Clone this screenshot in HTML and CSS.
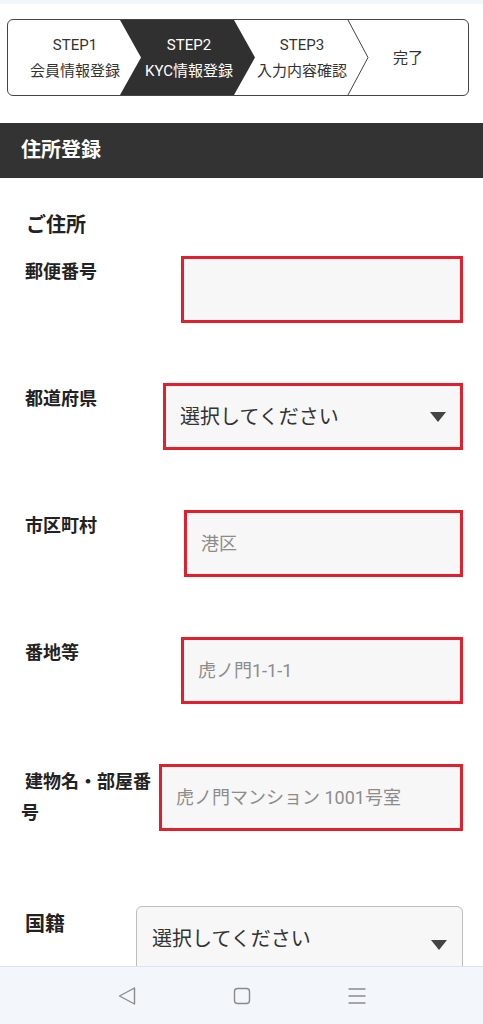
FILE: index.html
```html
<!DOCTYPE html>
<html lang="ja">
<head>
  <meta charset="UTF-8" />
  <meta name="viewport" content="width=device-width, initial-scale=1.0"/>
  <title>住所登録</title>
  <link rel="stylesheet" href="styles.css">
</head>
<body>
  <div class="status-strip"></div>

  <main class="page">
    <nav class="stepper">
      <svg class="stepper-bg" viewBox="0 0 460 75" preserveAspectRatio="none">
        <polygon points="112,0 226,0 247,37.5 226,75 112,75 133,37.5" fill="#303030"/>
        <polyline points="340,0 360,37.5 340,75" fill="none" stroke="#444" stroke-width="1"/>
      </svg>
      <div class="step step-1"><span>STEP1</span><span>会員情報登録</span></div>
      <div class="step step-2 active"><span>STEP2</span><span>KYC情報登録</span></div>
      <div class="step step-3"><span>STEP3</span><span>入力内容確認</span></div>
      <div class="step step-4"><span>完了</span></div>
    </nav>

    <h2 class="section-title">住所登録</h2>

    <form class="address-form">
      <h3 class="group-title">ご住所</h3>

      <div class="field-row row-zip">
        <label class="field-label" for="zip">郵便番号</label>
        <div class="field field-alert">
          <input type="text" id="zip" name="zip" />
        </div>
      </div>

      <div class="field-row row-pref">
        <label class="field-label" for="pref">都道府県</label>
        <div class="field field-alert field-select">
          <select id="pref" name="pref">
            <option>選択してください</option>
          </select>
          <span class="caret"></span>
        </div>
      </div>

      <div class="field-row row-city">
        <label class="field-label" for="city">市区町村</label>
        <div class="field field-alert">
          <input type="text" id="city" name="city" placeholder="港区" />
        </div>
      </div>

      <div class="field-row row-street">
        <label class="field-label" for="street">番地等</label>
        <div class="field field-alert">
          <input type="text" id="street" name="street" placeholder="虎ノ門1-1-1" />
        </div>
      </div>

      <div class="field-row row-building">
        <label class="field-label" for="building">建物名・部屋番号</label>
        <div class="field field-alert">
          <input type="text" id="building" name="building" placeholder="虎ノ門マンション 1001号室" />
        </div>
      </div>

      <div class="field-row row-nation">
        <label class="field-label" for="nation">国籍</label>
        <div class="field field-plain field-select">
          <select id="nation" name="nation">
            <option>選択してください</option>
          </select>
          <span class="caret"></span>
        </div>
      </div>
    </form>
  </main>

  <footer class="nav-bar">
    <svg class="nav-icon" viewBox="0 0 18 18">
      <polygon points="16.5,1 1.5,9 16.5,17" />
    </svg>
    <svg class="nav-icon" viewBox="0 0 18 18">
      <rect x="1.5" y="1.5" width="15" height="15" rx="3" />
    </svg>
    <svg class="nav-icon" viewBox="0 0 18 18">
      <line x1="1" y1="2" x2="17" y2="2" />
      <line x1="1" y1="9" x2="17" y2="9" />
      <line x1="1" y1="16" x2="17" y2="16" />
    </svg>
  </footer>
</body>
</html>
```

FILE: styles.css
```css
html, body {
  margin: 0;
  height: 100%;
}
body {
  font-family: Roboto, "Noto Sans CJK JP", sans-serif;
  color: #222;
  background: #fff;
  display: flex;
  flex-direction: column;
  overflow: hidden;
}
.status-strip {
  height: 4px;
  background: #f2f7fb;
  flex: none;
}
.page {
  flex: 1;
  overflow: hidden;
}

/* stepper */
.stepper {
  position: relative;
  display: flex;
  height: 75px;
  margin: 15px 14px 0 7px;
  border: 1px solid #444;
  border-radius: 6px;
  overflow: hidden;
}
.stepper-bg {
  position: absolute;
  left: 0;
  top: 0;
  width: 100%;
  height: 100%;
}
.step {
  position: relative;
  box-sizing: border-box;
  display: flex;
  flex-direction: column;
  align-items: center;
  justify-content: center;
  font-size: 15px;
  line-height: 26px;
  color: #333;
  flex: none;
}
.step-1 { width: 114px; padding-left: 20px; }
.step-2 { width: 134px; }
.step-3 { width: 92px; }
.step-4 { width: 120px; }
.step.active {
  color: #fff;
}

.section-title {
  margin: 27px 0 0;
  height: 55px;
  line-height: 55px;
  padding-left: 21px;
  background: #333;
  color: #fff;
  font-size: 20px;
  font-weight: 700;
}

/* form */
.address-form {
  padding: 0 20px 0 21px;
}
.group-title {
  margin: 32px 0 16px;
  text-indent: 5px;
  font-size: 20px;
  line-height: 30px;
  font-weight: 700;
}
.field-row {
  display: flex;
  align-items: flex-start;
  margin-bottom: 60px;
}
.field-label {
  flex: none;
  font-size: 18px;
  line-height: 31px;
  font-weight: 700;
  text-indent: 4px;
  color: #222;
}
.row-zip .field-label { width: 160px; }
.row-pref .field-label { width: 142px; }
.row-city .field-label { width: 163px; }
.row-street .field-label { width: 160px; }
.row-building .field-label { width: 136px; margin-top: 2px; margin-right: 2px; }
.row-nation { margin-top: 75px; }
.row-nation .field-label {
  width: 115px;
  font-size: 20px;
  margin-top: 3px;
}

.field {
  flex: 1;
  box-sizing: border-box;
  height: 67px;
  display: flex;
  align-items: center;
  padding: 0 14px;
  background: #f7f7f7;
}
.field-alert {
  border: 3px solid #e0202c;
}
.field-plain {
  border: 1px solid #bdbdbd;
  border-radius: 6px;
  padding: 0 15px;
}
.field input {
  width: 100%;
  border: none;
  background: transparent;
  padding: 0;
  font-family: inherit;
  font-size: 18px;
  color: #333;
  outline: none;
}
.field input::placeholder {
  color: #8c8c8c;
}
.field select {
  flex: 1;
  appearance: none;
  -webkit-appearance: none;
  border: none;
  background: transparent;
  padding: 0;
  font-family: inherit;
  font-size: 20px;
  color: #333;
  outline: none;
}
.caret {
  flex: none;
  width: 0;
  height: 0;
  border-left: 8px solid transparent;
  border-right: 8px solid transparent;
  border-top: 10px solid #444;
  pointer-events: none;
}
.row-nation .caret {
  margin-top: 10px;
}
.row-nation select {
  margin-top: -2px;
}

/* system nav */
.nav-bar {
  flex: none;
  height: 57px;
  border-top: 1px solid #dfe4ea;
  background: #f3f7fb;
  display: flex;
  align-items: center;
  justify-content: center;
  gap: 97px;
}
.nav-icon {
  width: 18px;
  height: 18px;
  fill: none;
  stroke: #8a8a8a;
  stroke-width: 1.4;
  stroke-linejoin: round;
  stroke-linecap: round;
}
```
